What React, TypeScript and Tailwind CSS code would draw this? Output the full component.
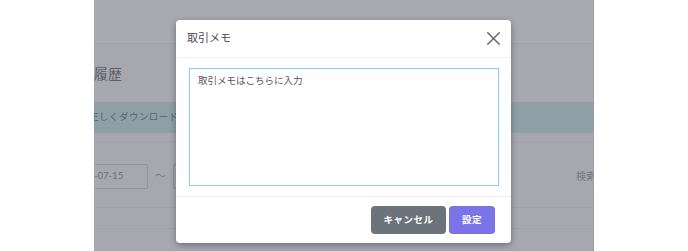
import { X } from "lucide-react";

const font = { fontFamily: "Lato, 'Noto Sans CJK JP', sans-serif" };

export default function App() {
  return (
    <div className="relative h-[251px] w-[688px] overflow-hidden bg-white" style={font}>
      {/* page behind the backdrop */}
      <div className="ml-[94px] flex h-full w-[500px] flex-col overflow-hidden border-r border-[#9d9da6] bg-[#a7a7b0]">
        <div className="h-[44px] shrink-0 border-b border-[#a2a2ab] bg-[#a9a9b1]" />
        <div className="flex h-[58px] shrink-0 items-center">
          <span className="-ml-[29px] text-[14px] tracking-wide text-[#5f5f68]">取引履歴</span>
        </div>
        <div className="flex h-[31px] shrink-0 items-center bg-[#8f9fa8]">
          <span className="-ml-[5px] text-[9.5px] tracking-wider text-[#56656e]">正しくダウンロードできない場合</span>
        </div>
        <div className="h-[9px] shrink-0 border-b border-[#a2a2ab]" />
        <div className="flex h-[65px] shrink-0 items-center pt-[4px]">
          <div className="-ml-[26px] flex h-[25px] w-[80px] items-center rounded-[2px] border border-[#93939c] pl-[3px] text-[9.5px] text-[#6e6e78]">
            2023-07-15
          </div>
          <span className="mx-[7px] text-[11px] text-[#7a7a84]">〜</span>
          <div className="h-[25px] w-[140px] rounded-[2px] border border-[#93939c]" />
          <span className="ml-auto -mr-[3px] text-[10px] text-[#757581]">検索</span>
        </div>
        <div className="h-[21px] shrink-0 border-t border-[#a2a2ab]" />
        <div className="flex-1 border-t border-[#a2a2ab]" />
      </div>

      {/* modal */}
      <div className="absolute left-[176px] top-[20px] flex h-[223px] w-[335px] flex-col rounded-[4px] bg-white shadow-[0_2px_6px_rgba(40,40,50,0.45)]">
        <div className="flex h-[38px] shrink-0 items-center justify-between border-b border-[#efeff3] pl-[11px] pr-[6px]">
          <span className="text-[11px] text-[#4a4a52]">取引メモ</span>
          <X className="h-[23px] w-[23px] text-[#6a6a70]" strokeWidth={1.6} />
        </div>
        <div className="shrink-0 pb-[10px] pl-[13px] pr-[12px] pt-[10px]">
          <textarea
            defaultValue="取引メモはこちらに入力"
            className="block h-[118px] w-full resize-none border border-[#86cdf8] px-[8px] py-[5px] text-[9.5px] leading-[14px] text-[#555559] outline-none"
            style={font}
          />
        </div>
        <div className="flex flex-1 items-center justify-end gap-[3px] border-t border-[#efeff3] pr-[16px]">
          <button className="h-[28px] w-[75px] rounded-[4px] bg-[#6c737b] text-[9.5px] font-bold tracking-wider text-white">
            キャンセル
          </button>
          <button className="h-[28px] w-[46px] rounded-[4px] bg-[#7a74e8] text-[9.5px] font-bold tracking-wider text-white">
            設定
          </button>
        </div>
      </div>
    </div>
  );
}
